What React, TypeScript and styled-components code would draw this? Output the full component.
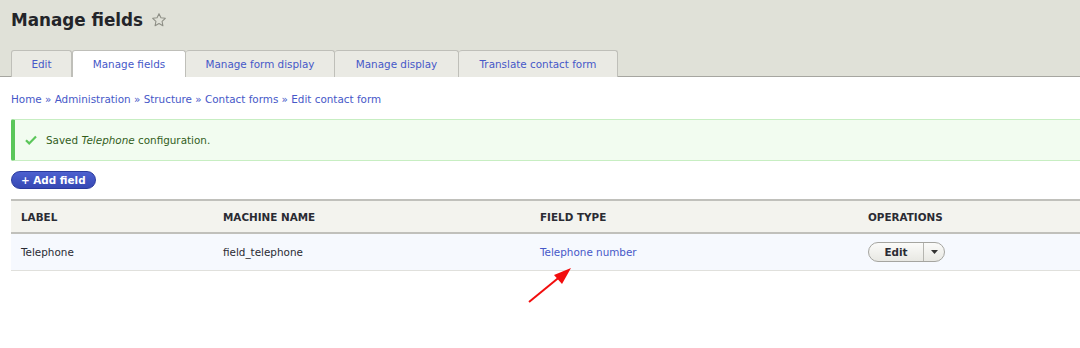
import styled, { createGlobalStyle } from "styled-components";

const GlobalStyle = createGlobalStyle`
  html, body {
    margin: 0;
    padding: 0;
    background: #ffffff;
    font-family: "DejaVu Sans", "Liberation Sans", sans-serif;
    color: #222330;
  }
`;

const Page = styled.div`
  position: relative;
  width: 1080px;
  height: 348px;
  overflow: hidden;
`;

// 상단 회색 헤더
const Header = styled.div`
  background: #e0e1d8;
  height: 77px;
  border-bottom: 1px solid #a6a6a0;
  display: flex;
  flex-direction: column;
  justify-content: space-between;
  padding-left: 11px;
  box-sizing: border-box;
`;

const TitleRow = styled.div`
  display: flex;
  align-items: center;
  gap: 8px;
  padding-top: 9px;
`;

const Title = styled.h1`
  margin: 0;
  font-size: 16.8px;
  font-weight: bold;
  color: #232429;
  line-height: 22px;
`;

const Tabs = styled.ul`
  display: flex;
  margin: 0;
  padding: 0;
  list-style: none;
`;

const Tab = styled.li<{ active?: boolean; w: number }>`
  width: ${(p) => p.w}px;
  height: 27px;
  box-sizing: border-box;
  display: flex;
  align-items: center;
  justify-content: center;
  font-size: 10.4px;
  color: #4658c8;
  background: ${(p) => (p.active ? "#ffffff" : "#eaeae4")};
  border: 1px solid #bfbfb9;
  border-bottom: none;
  border-left: ${(p) => (p.active ? "1px solid #bfbfb9" : "none")};
  border-radius: 3px 3px 0 0;
  margin-bottom: -1px;
  &:first-child {
    border-left: 1px solid #bfbfb9;
  }
`;

const Content = styled.div`
  padding: 15px 0 0 11px;
`;

const Breadcrumb = styled.div`
  font-size: 10.4px;
  color: #4658c8;
  line-height: 14px;
  height: 14px;
`;

const Message = styled.div`
  margin-top: 13px;
  height: 42px;
  box-sizing: border-box;
  background: #f2fcf0;
  border: 1px solid #c7eec2;
  border-left: 4px solid #5bc65a;
  border-right: none;
  border-radius: 2px 0 0 2px;
  display: flex;
  align-items: center;
  padding-left: 10px;
  gap: 9px;
  font-size: 10.4px;
  color: #325e1c;
  em {
    font-style: italic;
  }
`;

const AddButton = styled.button`
  margin-top: 10px;
  height: 18px;
  padding: 0 9px;
  border: 1px solid #2a3a9e;
  border-radius: 10px;
  background: linear-gradient(#4d60cf, #3648b4);
  color: #ffffff;
  font-family: inherit;
  font-size: 10.4px;
  font-weight: bold;
  line-height: 16px;
  display: block;
`;

const Table = styled.table`
  margin: 10px 0 0 11px;
  width: 1080px;
  border-collapse: collapse;
  font-size: 10.4px;
`;

const HeadCell = styled.th<{ w: number }>`
  width: ${(p) => p.w}px;
  text-align: left;
  font-weight: bold;
  text-transform: uppercase;
  color: #2a2b33;
  background: #f3f3ee;
  height: 33px;
  padding: 0 10px;
  border-top: 2px solid #c0c0bb;
  border-bottom: 2px solid #c0c0bb;
  box-sizing: border-box;
`;

const Cell = styled.td<{ link?: boolean }>`
  height: 36px;
  padding: 0 10px;
  background: #f6f9fe;
  border-bottom: 1px solid #e0e0dc;
  color: ${(p) => (p.link ? "#4658c8" : "#2a2b33")};
`;

const DropButton = styled.div`
  display: inline-flex;
  height: 20px;
  box-sizing: border-box;
  border: 1px solid #a5a5a0;
  border-radius: 10px;
  background: linear-gradient(#fbfbf9, #e8e8e3);
  overflow: hidden;
`;

const DropMain = styled.span`
  width: 54px;
  display: flex;
  align-items: center;
  justify-content: center;
  font-weight: bold;
  color: #2a2b33;
  border-right: 1px solid #b5b5b0;
`;

const DropToggle = styled.span`
  width: 20px;
  display: flex;
  align-items: center;
  justify-content: center;
`;

const Arrow = styled.svg`
  position: absolute;
  left: 520px;
  top: 262px;
`;

const columns = [
  { label: "Label", w: 202 },
  { label: "Machine name", w: 317 },
  { label: "Field type", w: 328 },
  { label: "Operations", w: 233 },
];

const tabs = [
  { label: "Edit", w: 61 },
  { label: "Manage fields", w: 114, active: true },
  { label: "Manage form display", w: 149 },
  { label: "Manage display", w: 124 },
  { label: "Translate contact form", w: 159 },
];

function App() {
  return (
    <Page>
      <GlobalStyle />
      <Header>
        <TitleRow>
          <Title>Manage fields</Title>
          <svg width="16" height="16" viewBox="0 0 24 24" fill="none" stroke="#8e8f86" strokeWidth="1.6" strokeLinejoin="round">
            <path d="M12 2.5l2.9 6.1 6.6.8-4.9 4.6 1.3 6.6L12 17.3l-5.9 3.3 1.3-6.6-4.9-4.6 6.6-.8z" />
          </svg>
        </TitleRow>
        <Tabs>
          {tabs.map((t) => (
            <Tab key={t.label} w={t.w} active={t.active}>
              {t.label}
            </Tab>
          ))}
        </Tabs>
      </Header>
      <Content>
        <Breadcrumb>
          Home » Administration » Structure » Contact forms » Edit contact form
        </Breadcrumb>
        <Message>
          <svg width="12" height="10" viewBox="0 0 12 10">
            <path d="M1 5.2l3.2 3.2L11 1.5" fill="none" stroke="#5bc65a" strokeWidth="2.2" />
          </svg>
          <span>
            Saved <em>Telephone</em> configuration.
          </span>
        </Message>
        <AddButton>+ Add field</AddButton>
      </Content>
      <Table>
        <thead>
          <tr>
            {columns.map((c) => (
              <HeadCell key={c.label} w={c.w}>
                {c.label}
              </HeadCell>
            ))}
          </tr>
        </thead>
        <tbody>
          <tr>
            <Cell>Telephone</Cell>
            <Cell>field_telephone</Cell>
            <Cell link>Telephone number</Cell>
            <Cell>
              <DropButton>
                <DropMain>Edit</DropMain>
                <DropToggle>
                  <svg width="7" height="4" viewBox="0 0 7 4">
                    <path d="M0 0h7L3.5 4z" fill="#333" />
                  </svg>
                </DropToggle>
              </DropButton>
            </Cell>
          </tr>
        </tbody>
      </Table>
      <Arrow width="60" height="50" viewBox="0 0 60 50">
        <line x1="9" y1="40" x2="42" y2="13" stroke="#f20d0d" strokeWidth="2" />
        <path d="M51 6L34 13l8 9z" fill="#f20d0d" />
      </Arrow>
    </Page>
  );
}

export default App;
